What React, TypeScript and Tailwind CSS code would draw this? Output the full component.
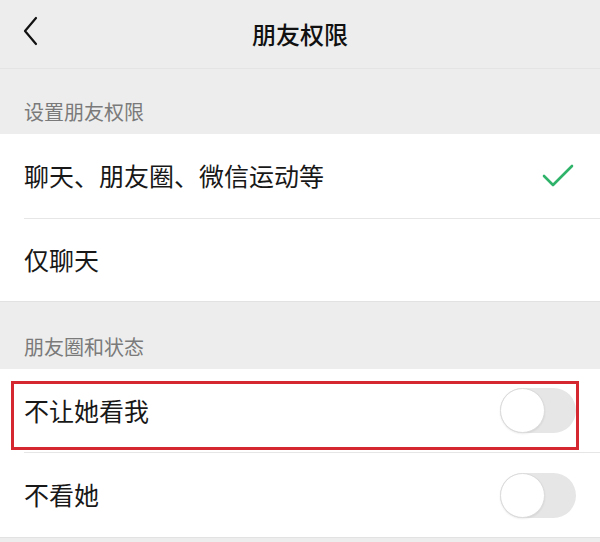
type Row = {
  label: string;
  kind: "check" | "toggle" | "none";
  height: string;
  checked?: boolean;
  marked?: boolean;
};

const permissionRows: Row[] = [
  { label: "聊天、朋友圈、微信运动等", kind: "check", height: "h-[85px]", checked: true },
  { label: "仅聊天", kind: "none", height: "h-[82px]" },
];

const momentsRows: Row[] = [
  { label: "不让她看我", kind: "toggle", height: "h-[84px]", marked: true },
  { label: "不看她", kind: "toggle", height: "h-[84px]" },
];

function Toggle() {
  return (
    <div className="flex h-[45px] w-[76px] items-center rounded-full bg-[#e6e6e6]">
      <div className="h-[45px] w-[45px] rounded-full border border-[#dcdcdc] bg-white shadow-[0_1px_2px_rgba(0,0,0,0.08)]" />
    </div>
  );
}

function Check() {
  return (
    <svg width="32" height="24" viewBox="0 0 32 24" fill="none">
      <path
        d="M2 12 L11 21 L30 2"
        stroke="#2fb36a"
        strokeWidth="2.6"
        strokeLinecap="round"
        strokeLinejoin="round"
      />
    </svg>
  );
}

function SettingRow({ row, last }: { row: Row; last: boolean }) {
  return (
    <div className="relative pl-6">
      <div
        className={`flex ${row.height} items-center pr-6 ${last ? "" : "border-b border-[#e6e6e6]"}`}
      >
        <span className="flex-1 text-[25px] text-[#181818]">{row.label}</span>
        {row.kind === "check" && row.checked && (
          <span className="mr-[2px] flex">
            <Check />
          </span>
        )}
        {row.kind === "toggle" && <Toggle />}
      </div>
      {row.marked && (
        <div className="pointer-events-none absolute left-[11px] right-[21px] top-[12px] bottom-[3px] border-[3px] border-[#d4272f]" />
      )}
    </div>
  );
}

function Section({ title, rows, labelHeight }: { title: string; rows: Row[]; labelHeight: string }) {
  return (
    <section>
      <div className={`flex ${labelHeight} items-end px-6 pb-[8px]`}>
        <span className="text-[20px] leading-[28px] text-[#7a7a7a]">{title}</span>
      </div>
      <div className="border-b border-[#e2e2e2] bg-white">
        {rows.map((row, i) => (
          <SettingRow key={row.label} row={row} last={i === rows.length - 1} />
        ))}
      </div>
    </section>
  );
}

export default function App() {
  return (
    <div
      className="h-[542px] w-[600px] overflow-hidden bg-[#ededed]"
      style={{ fontFamily: '"Noto Sans CJK SC", "Noto Sans", sans-serif' }}
    >
      <header className="relative flex h-[69px] items-center justify-center border-b border-[#e4e4e4]">
        <button className="absolute left-[18px] top-[14px] flex h-[34px] w-[24px] items-center justify-center">
          <svg width="16" height="30" viewBox="0 0 16 30" fill="none">
            <path
              d="M14 2 L3 15 L14 28"
              stroke="#111"
              strokeWidth="2.2"
              strokeLinecap="round"
              strokeLinejoin="round"
            />
          </svg>
        </button>
        <h1 className="text-[24px] font-medium text-[#111]">朋友权限</h1>
      </header>
      <Section title="设置朋友权限" rows={permissionRows} labelHeight="h-[65px]" />
      <Section title="朋友圈和状态" rows={momentsRows} labelHeight="h-[67px]" />
    </div>
  );
}
